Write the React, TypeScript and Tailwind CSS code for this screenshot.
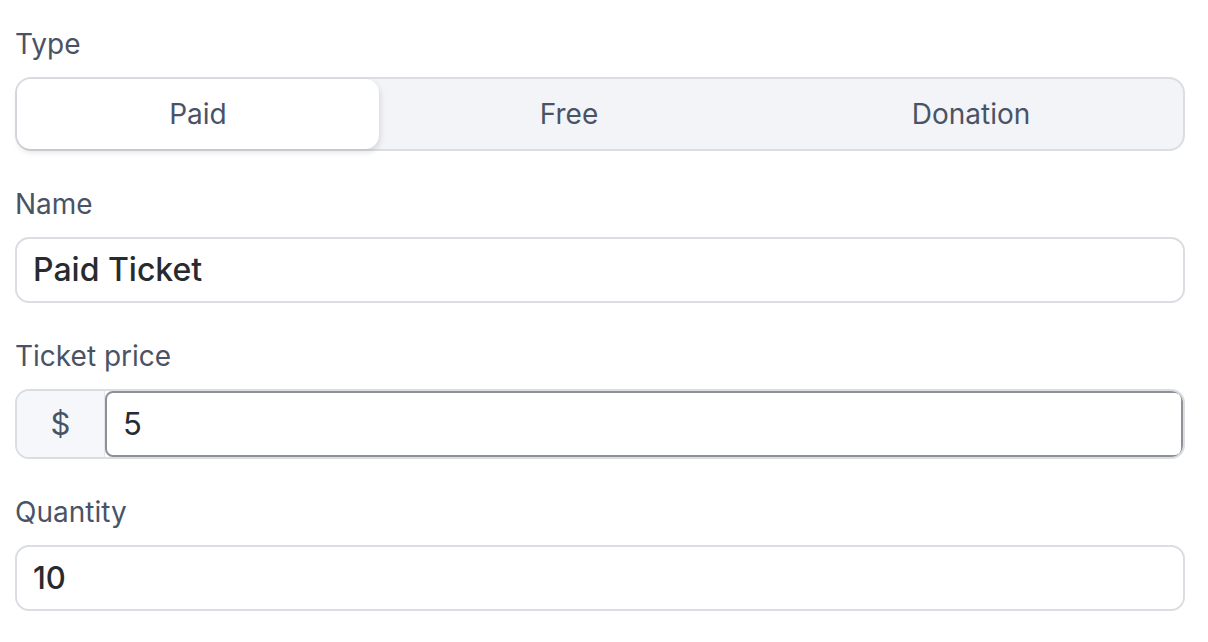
import React from "react";

export default function App() {
  return (
    <div className="w-[1208px] h-[642px] bg-white" style={{ fontFamily: "Inter, 'Noto Sans', sans-serif" }}>
      <div className="w-[1170px] ml-[15px] pt-[28px] flex flex-col">
        <div className="text-[28px] leading-[32px] text-[#4a5365]">Type</div>
        <div className="mt-[17px] h-[74px] rounded-[16px] border-2 border-[#dadde2] bg-[#f2f4f8] flex">
          <div className="w-[362px] h-[70px] rounded-[14px] bg-white shadow-[1px_3px_6px_rgba(0,0,0,0.13)] flex items-center justify-center text-[28px] text-[#4a5365]">
            Paid
          </div>
          <div className="w-[380px] flex items-center justify-center text-[28px] text-[#4a5365]">Free</div>
          <div className="flex-1 flex items-center justify-center text-[28px] text-[#4a5365]">Donation</div>
        </div>
        <div className="mt-[37px] text-[28px] leading-[32px] text-[#4a5365]">Name</div>
        <div className="mt-[17px] h-[66px] rounded-[14px] border-2 border-[#dadde2] flex items-center px-[16px] text-[32px] font-medium text-[#272b30]">
          Paid Ticket
        </div>
        <div className="mt-[37px] text-[28px] leading-[32px] text-[#4a5365]">Ticket price</div>
        <div className="mt-[17px] h-[70px] rounded-[14px] border-2 border-[#dadde2] flex overflow-hidden">
          <div className="w-[88px] bg-[#f5f7fa] border-r border-[#e3e6ea] flex items-center justify-center text-[31px] text-[#4a5365]">$</div>
          <div className="flex-1 rounded-[8px] border-2 border-[#8e9096] bg-white flex items-center px-[16px] text-[31px] text-[#272b30]">
            5
          </div>
        </div>
        <div className="mt-[37px] text-[28px] leading-[32px] text-[#4a5365]">Quantity</div>
        <div className="mt-[17px] h-[66px] rounded-[14px] border-2 border-[#dadde2] flex items-center px-[16px] text-[31px] font-medium text-[#272b30]">
          10
        </div>
      </div>
    </div>
  );
}
